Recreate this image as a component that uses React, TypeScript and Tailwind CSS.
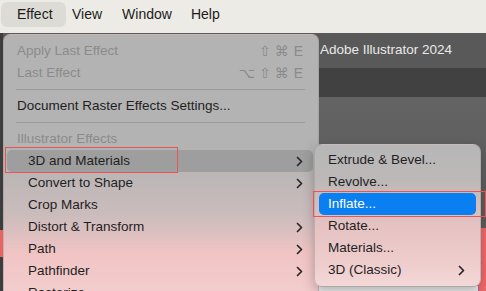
import React from "react";

const Chevron = ({ className = "" }: { className?: string }) => (
  <svg width="7" height="11" viewBox="0 0 7 11" className={className} fill="none">
    <path d="M1.5 1.5 L5.5 5.5 L1.5 9.5" stroke="#262626" strokeWidth="1.7" strokeLinecap="round" strokeLinejoin="round" />
  </svg>
);

const Shortcut = ({ keys }: { keys: string[] }) => (
  <span className="flex items-center gap-[4px] text-[#8a8a8a] text-[14px] font-['DejaVu_Sans',sans-serif]">
    {keys.map((k, i) => (
      <span key={i} className={k === "E" ? "font-['Liberation_Sans',Arial,sans-serif] text-[14px] ml-[1px]" : ""}>
        {k}
      </span>
    ))}
  </span>
);

type Row = {
  label: string;
  disabled?: boolean;
  indent?: boolean;
  shortcut?: string[];
  chevron?: boolean;
  highlight?: boolean;
  sep?: boolean;
};

const mainRows: Row[] = [
  { label: "Apply Last Effect", disabled: true, shortcut: ["⇧", "⌘", "E"] },
  { label: "Last Effect", disabled: true, shortcut: ["⌥", "⇧", "⌘", "E"] },
  { label: "", sep: true },
  { label: "Document Raster Effects Settings..." },
  { label: "", sep: true },
  { label: "Illustrator Effects", disabled: true },
  { label: "3D and Materials", indent: true, chevron: true, highlight: true },
  { label: "Convert to Shape", indent: true, chevron: true },
  { label: "Crop Marks", indent: true },
  { label: "Distort & Transform", indent: true, chevron: true },
  { label: "Path", indent: true, chevron: true },
  { label: "Pathfinder", indent: true, chevron: true },
  { label: "Rasterize", indent: true },
];

const subRows: Row[] = [
  { label: "Extrude & Bevel..." },
  { label: "Revolve..." },
  { label: "Inflate...", highlight: true },
  { label: "Rotate..." },
  { label: "Materials..." },
  { label: "3D (Classic)", chevron: true },
];

export default function App() {
  return (
    <div className="relative w-[486px] h-[291px] overflow-hidden font-['Liberation_Sans',Arial,sans-serif] text-[#1f1f1f]">
      {/* macOS menu bar */}
      <header className="h-[33px] bg-[#ecebe6] flex items-start pt-[2px] pl-[1px] text-[14px] text-[#1c1c1c]">
        <div className="h-[25px] w-[65px] rounded-[6px] bg-[#dcdbd5] flex items-center pl-[16px]">Effect</div>
        <div className="h-[25px] flex items-center ml-[6px]">View</div>
        <div className="h-[25px] flex items-center ml-[20px]">Window</div>
        <div className="h-[25px] flex items-center ml-[19px]">Help</div>
      </header>

      {/* Illustrator app background */}
      <main className="h-[258px] flex flex-col bg-[#5f5f5f]">
        <div className="h-[35px] bg-[#595959] flex items-center pl-[320px] text-[#e9e9e9] text-[13.5px]">
          Adobe Illustrator 2024
        </div>
        <div className="h-[29px] bg-[#414141]" />
        <div className="flex-1 bg-gradient-to-b from-[#636363] to-[#5a5a5a]" />
      </main>

      {/* canvas bits peeking through */}
      <div className="absolute left-0 top-[33px] w-[3px] h-[258px] bg-[#3d3d3d]" />
      <div className="absolute left-0 top-[230px] w-[3px] h-[27px] bg-[#e96363]" />
      <div className="absolute left-[470px] top-[228px] w-[16px] h-[63px] bg-[#f26a6a]" />
      <div className="absolute left-[476px] top-[262px] w-[14px] h-[40px] rounded-[50%] border-l-2 border-[#4a5ef0]" />
      <div className="absolute left-[318px] top-[286px] w-[160px] h-[5px] bg-[#ededed]" />

      {/* Effect menu */}
      <div className="absolute left-[3px] top-[34px] w-[316px] h-[275px] rounded-t-[7px] border border-[#8f8f8f]/40 bg-[linear-gradient(to_bottom,#b3b3b3_0%,#b4b3b3_44%,#cbbcbc_66%,#f1c4c4_80%,#f3d0d0_100%)] pt-[5px]">
        {mainRows.map((r, i) =>
          r.sep ? (
            <div key={i} className="h-[11px] flex items-center ml-[12px] mr-[13px]">
              <div className="h-px w-full bg-[#9b9b9b]" />
            </div>
          ) : (
            <div
              key={i}
              className={`h-[22px] ml-[3px] mr-[5px] rounded-[5px] flex items-center justify-between pr-[10px] text-[13.5px] ${
                r.indent ? "pl-[21px]" : "pl-[10px]"
              } ${r.highlight ? "bg-[#9e9e9e]" : ""} ${r.disabled ? "text-[#8b8b8b]" : "text-[#1f1f1f]"}`}
            >
              <span>{r.label}</span>
              {r.shortcut && <Shortcut keys={r.shortcut} />}
              {r.chevron && <Chevron />}
            </div>
          )
        )}
      </div>

      {/* 3D and Materials submenu */}
      <div className="absolute left-[314px] top-[144px] w-[167px] h-[143px] rounded-[8px] border border-[#9a9a9a]/50 shadow-[0_4px_12px_rgba(0,0,0,0.25)] bg-[linear-gradient(to_bottom,#b7b7b7_0%,#bdb8b8_25%,#e6c2c2_58%,#f0cfcf_88%,#f3d8d8_100%)] pt-[4px]">
        {subRows.map((r, i) => (
          <div
            key={i}
            className={`h-[22px] mx-[4px] rounded-[5px] flex items-center justify-between pl-[9px] pr-[11px] text-[13.5px] ${
              r.highlight ? "bg-[#0a7ff2] text-white" : "text-[#1f1f1f]"
            }`}
          >
            <span>{r.label}</span>
            {r.chevron && <Chevron />}
          </div>
        ))}
      </div>

      {/* red annotation boxes */}
      <div className="absolute left-[5px] top-[147px] w-[173px] h-[26px] border border-[#ef5252]" />
      <div className="absolute left-[313px] top-[191px] w-[173px] h-[26px] border border-[#ef5252]" />
    </div>
  );
}
